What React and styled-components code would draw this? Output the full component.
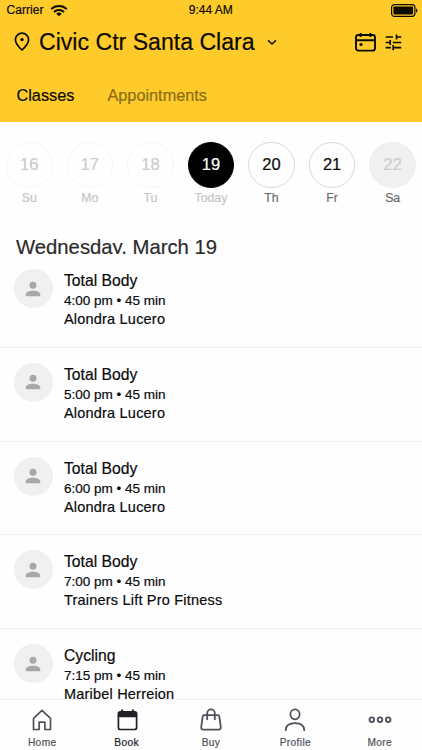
import React from 'react';
import styled, { createGlobalStyle } from 'styled-components';

const DAYS = [
  { date: 16, label: 'Su', state: 'past' },
  { date: 17, label: 'Mo', state: 'past' },
  { date: 18, label: 'Tu', state: 'past' },
  { date: 19, label: 'Today', state: 'selected' },
  { date: 20, label: 'Th', state: 'open' },
  { date: 21, label: 'Fr', state: 'open' },
  { date: 22, label: 'Sa', state: 'closed' },
];

const CLASSES = [
  { name: 'Total Body', time: '4:00 pm', trainer: 'Alondra Lucero' },
  { name: 'Total Body', time: '5:00 pm', trainer: 'Alondra Lucero' },
  { name: 'Total Body', time: '6:00 pm', trainer: 'Alondra Lucero' },
  { name: 'Total Body', time: '7:00 pm', trainer: 'Trainers Lift Pro Fitness' },
  { name: 'Cycling', time: '7:15 pm', trainer: 'Maribel Herrejon' },
];

const WifiIcon = () => (
  <svg width="18" height="13" viewBox="0 0 18 13" fill="none" stroke="#0d0a02" strokeWidth="2">
    <path d="M1.2 5.1a11.2 11.2 0 0 1 15.6 0" />
    <path d="M4 8a7.2 7.2 0 0 1 10 0" />
    <path d="M9 12.3 6.2 9.7a4.2 4.2 0 0 1 5.6 0z" fill="#0d0a02" stroke="none" />
  </svg>
);

const BatteryIcon = () => (
  <svg width="27" height="13" viewBox="0 0 27 13">
    <rect x="0.6" y="0.6" width="23.3" height="11.8" rx="2.8" fill="none" stroke="#0d0a02" strokeWidth="1.2" />
    <rect x="2.4" y="2.4" width="19.7" height="8.2" rx="1" fill="#0d0a02" />
    <path d="M25 4.4c1.9.6 1.9 3.6 0 4.2z" fill="#0d0a02" />
  </svg>
);

const PinIcon = () => (
  <svg width="16" height="20" viewBox="0 0 16 20">
    <path
      d="M8 18C5 15.2 1.4 11.5 1.4 7.7a6.6 6.5 0 0 1 13.2 0c0 3.800-3.600 7.500-6.600 10.300z"
      fill="none"
      stroke="#0d0a02"
      strokeWidth="1.7"
      strokeLinejoin="round"
    />
    <circle cx="8" cy="7.6" r="1.700" fill="#0d0a02" />
  </svg>
);

const ChevronIcon = () => (
  <svg width="10" height="7" viewBox="0 0 10 7" fill="none" stroke="#0d0a02" strokeWidth="1.4">
    <path d="M1 1.2 5 5 9 1.2" />
  </svg>
);

const ScheduleIcon = () => (
  <svg width="21" height="20" viewBox="0 0 21 20" fill="none" stroke="#0d0a02" strokeWidth="1.9">
    <rect x="1" y="3" width="19" height="15.6" rx="2.4" />
    <path d="M1 8.300h19M5.600 1v4M15.400 1v4" />
    <circle cx="6" cy="12.500" r="1.600" fill="#0d0a02" stroke="none" />
  </svg>
);

const TuneIcon = () => (
  <svg width="17" height="18" viewBox="0 0 17 18" fill="none" stroke="#0d0a02" strokeWidth="1.7">
    <path d="M.6 4h7.400M11.500 1.400v5.200M11.500 4h4.800" />
    <path d="M.6 9.500h4.600M5.200 7v5M7.800 9.500h8.500" />
    <path d="M.6 14.700h5.200M8.200 12v5.300M8.200 14.700h8.100" />
  </svg>
);

const PersonIcon = () => (
  <svg width="16" height="16" viewBox="0 0 16 16" fill="#a8a8a8">
    <circle cx="8" cy="4.200" r="3.500" />
    <path d="M.7 15.200v-1.500c0-2.600 3.700-4 7.300-4s7.300 1.400 7.300 4v.7q0 .8-.8.8h-13q-.8 0-.8-.8z" />
  </svg>
);

const HomeIcon = () => (
  <svg width="24" height="24" viewBox="0 0 24 24" fill="none" stroke="#50515a" strokeWidth="1.700" strokeLinejoin="round">
    <path d="M3.500 10.400 12 2.400l8.500 8v11.100h-5.600v-7.300H9.100v7.300H3.500z" />
  </svg>
);

const BookIcon = () => (
  <svg width="24" height="24" viewBox="0 0 24 24" fill="none" stroke="#202127">
    <rect x="3.400" y="3.900" width="18.200" height="17.600" rx="2" strokeWidth="1.700" />
    <path d="M2.900 9.200V5.500a2 2 0 0 1 2-2h15.200a2 2 0 0 1 2 2v3.700z" fill="#202127" stroke="none" />
    <path d="M7.100 1.600v4M17.900 1.600v4" strokeWidth="2" />
  </svg>
);

const BuyIcon = () => (
  <svg width="24" height="24" viewBox="0 0 24 24" fill="none" stroke="#50515a" strokeWidth="1.800" strokeLinejoin="round" strokeLinecap="round">
    <path d="M5 7.200h14a1.300 1.300 0 0 1 1.300 1.200l1.500 10.900a2 2 0 0 1-2 2.300H4.200a2 2 0 0 1-2-2.300L3.700 8.400A1.300 1.300 0 0 1 5 7.200z" />
    <path d="M8.200 11.300V5.200a3.800 3.800 0 0 1 7.600 0v6.100" />
  </svg>
);

const ProfileIcon = () => (
  <svg width="24" height="24" viewBox="0 0 24 24" fill="none" stroke="#50515a" strokeWidth="1.800" strokeLinecap="round">
    <ellipse cx="12" cy="6.300" rx="4.600" ry="5" />
    <path d="M2.700 22.200c.2-4.800 3.200-7.100 9.300-7.100s9.100 2.300 9.300 7.100" />
  </svg>
);

const MoreIcon = () => (
  <svg width="24" height="24" viewBox="0 0 24 24" fill="none" stroke="#50515a" strokeWidth="1.800">
    <circle cx="3.800" cy="11.700" r="2.300" />
    <circle cx="12" cy="11.700" r="2.300" />
    <circle cx="20.200" cy="11.700" r="2.300" />
  </svg>
);

const TABS = [
  { label: 'Home', Icon: HomeIcon },
  { label: 'Book', Icon: BookIcon, active: true },
  { label: 'Buy', Icon: BuyIcon },
  { label: 'Profile', Icon: ProfileIcon },
  { label: 'More', Icon: MoreIcon },
];

const App = () => (
  <>
    <GlobalStyle />
    <Screen>
      <Header>
        <StatusBar>
          <Carrier>
            Carrier <WifiIcon />
          </Carrier>
          <Clock>9:44 AM</Clock>
          <BatteryIcon />
        </StatusBar>
        <LocationBar>
          <PinIcon />
          <LocationName>Civic Ctr Santa Clara</LocationName>
          <ChevronIcon />
          <HeaderActions>
            <ScheduleIcon />
            <TuneIcon />
          </HeaderActions>
        </LocationBar>
        <SegmentBar>
          <Segment $active>Classes</Segment>
          <Segment>Appointments</Segment>
        </SegmentBar>
      </Header>

      <DayStrip>
        {DAYS.map(({ date, label, state }) => (
          <Day key={date}>
            <DayCircle $state={state}>{date}</DayCircle>
            <DayLabel $dim={state === 'past' || state === 'selected'}>{label}</DayLabel>
          </Day>
        ))}
      </DayStrip>

      <DateHeading>Wednesday, March 19</DateHeading>

      <ClassList>
        {CLASSES.map(({ name, time, trainer }) => (
          <ClassRow key={time}>
            <Avatar>
              <PersonIcon />
            </Avatar>
            <ClassInfo>
              <ClassName>{name}</ClassName>
              <ClassTime>{time} • 45 min</ClassTime>
              <Trainer>{trainer}</Trainer>
            </ClassInfo>
          </ClassRow>
        ))}
      </ClassList>

      <TabBar>
        {TABS.map(({ label, Icon, active }) => (
          <Tab key={label} $active={active}>
            <Icon />
            <TabLabel>{label}</TabLabel>
          </Tab>
        ))}
      </TabBar>
    </Screen>
  </>
);

const GlobalStyle = createGlobalStyle`
  body {
    margin: 0;
    background: #fff;
    font-family: 'Liberation Sans', Arial, sans-serif;
    -webkit-text-stroke: 0.2px;
  }

  * {
    box-sizing: border-box;
  }

  svg {
    display: block;
    flex: none;
  }
`;

const Screen = styled.div`
  display: flex;
  flex-direction: column;
  width: 422px;
  height: 750px;
  overflow: hidden;
  background: #fefefe;
  color: #0b0b0b;
`;

const Header = styled.header`
  flex: none;
  height: 122px;
  background: #ffcb2b;
  color: #0d0a02;
`;

const StatusBar = styled.div`
  display: grid;
  grid-template-columns: 1fr auto 1fr;
  align-items: center;
  height: 20px;
  padding: 0 4px 0 6.5px;
  font-size: 12px;

  > svg {
    justify-self: end;
  }
`;

const Carrier = styled.div`
  display: flex;
  align-items: center;
  gap: 6px;
  letter-spacing: 0.05px;
`;

const Clock = styled.div`
  margin: 0 3px 0 0;
`;

const LocationBar = styled.div`
  display: flex;
  align-items: center;
  height: 44px;
  padding: 0 20px 0 14px;
`;

const LocationName = styled.h1`
  margin: 0 12px 0 9px;
  font-size: 23.1px;
  font-weight: 400;
  line-height: 28px;
  white-space: nowrap;
`;

const HeaderActions = styled.div`
  display: flex;
  align-items: center;
  gap: 9px;
  margin-left: auto;
`;

const SegmentBar = styled.nav`
  display: flex;
  gap: 33px;
  padding: 21px 16.5px 0;
`;

const Segment = styled.span`
  font-size: 16.3px;
  line-height: 20px;
  color: ${({ $active }) => ($active ? '#0d0a02' : '#8c6f17')};
`;

const DayStrip = styled.div`
  display: grid;
  grid-template-columns: repeat(7, 60.57px);
  flex: none;
  height: 114px;
  margin-left: -1px;
  padding-top: 19.5px;
`;

const Day = styled.div`
  display: flex;
  flex-direction: column;
  align-items: center;
`;

const circleStyles = {
  past: 'border-color: #f5f5f5; color: #cbcbcb;',
  selected: 'background: #000; border-color: #000; color: #fff;',
  open: 'border-color: #d8d8d8; color: #0b0b0b;',
  closed: 'background: #f0f0f0; border-color: #f0f0f0; color: #cdcdcd;',
};

const DayCircle = styled.div`
  display: flex;
  align-items: center;
  justify-content: center;
  width: 46.5px;
  height: 46.5px;
  border: 1px solid;
  border-radius: 50%;
  font-size: 16.5px;
  ${({ $state }) => circleStyles[$state]}
`;

const DayLabel = styled.div`
  margin-top: 3px;
  font-size: 12.3px;
  line-height: 15px;
  color: ${({ $dim }) => ($dim ? '#c6c6c6' : '#6c6c6c')};
`;

// Fixed height, ends right at the text baseline
const DateHeading = styled.h2`
  flex: none;
  height: 18px;
  margin: 0;
  padding: 1px 0 0 16px;
  overflow: hidden;
  font-size: 20.3px;
  font-weight: 400;
  line-height: 20px;
  color: #2b2b2b;
`;

const ClassList = styled.div`
  flex: 1;
  min-height: 0;
  overflow: hidden;
`;

const ClassRow = styled.div`
  display: flex;
  height: 93.75px;
  padding-left: 13.5px;
  border-bottom: 1px solid #f1f1f1;
`;

const Avatar = styled.div`
  display: flex;
  align-items: center;
  justify-content: center;
  width: 39px;
  height: 39px;
  margin-top: 15px;
  border-radius: 50%;
  background: #f0f0f0;
`;

const ClassInfo = styled.div`
  padding: 17px 0 0 11.5px;
  white-space: nowrap;
`;

const ClassName = styled.div`
  font-size: 15.7px;
  line-height: 20px;
`;

const ClassTime = styled.div`
  font-size: 13.5px;
  line-height: 19px;
`;

const Trainer = styled.div`
  font-size: 14.5px;
  line-height: 18.5px;
  letter-spacing: 0.2px;
`;

const TabBar = styled.nav`
  display: grid;
  grid-template-columns: repeat(5, 1fr);
  flex: none;
  height: 51px;
  border-top: 1px solid #f3f3f3;
  background: #fefefe;
`;

const Tab = styled.div`
  display: flex;
  flex-direction: column;
  align-items: center;
  padding-top: 8px;
  color: ${({ $active }) => ($active ? '#202127' : '#50515a')};
`;

const TabLabel = styled.div`
  margin-top: 4px;
  font-size: 10.2px;
  line-height: 13px;
  letter-spacing: 0.35px;
`;

export default App;
